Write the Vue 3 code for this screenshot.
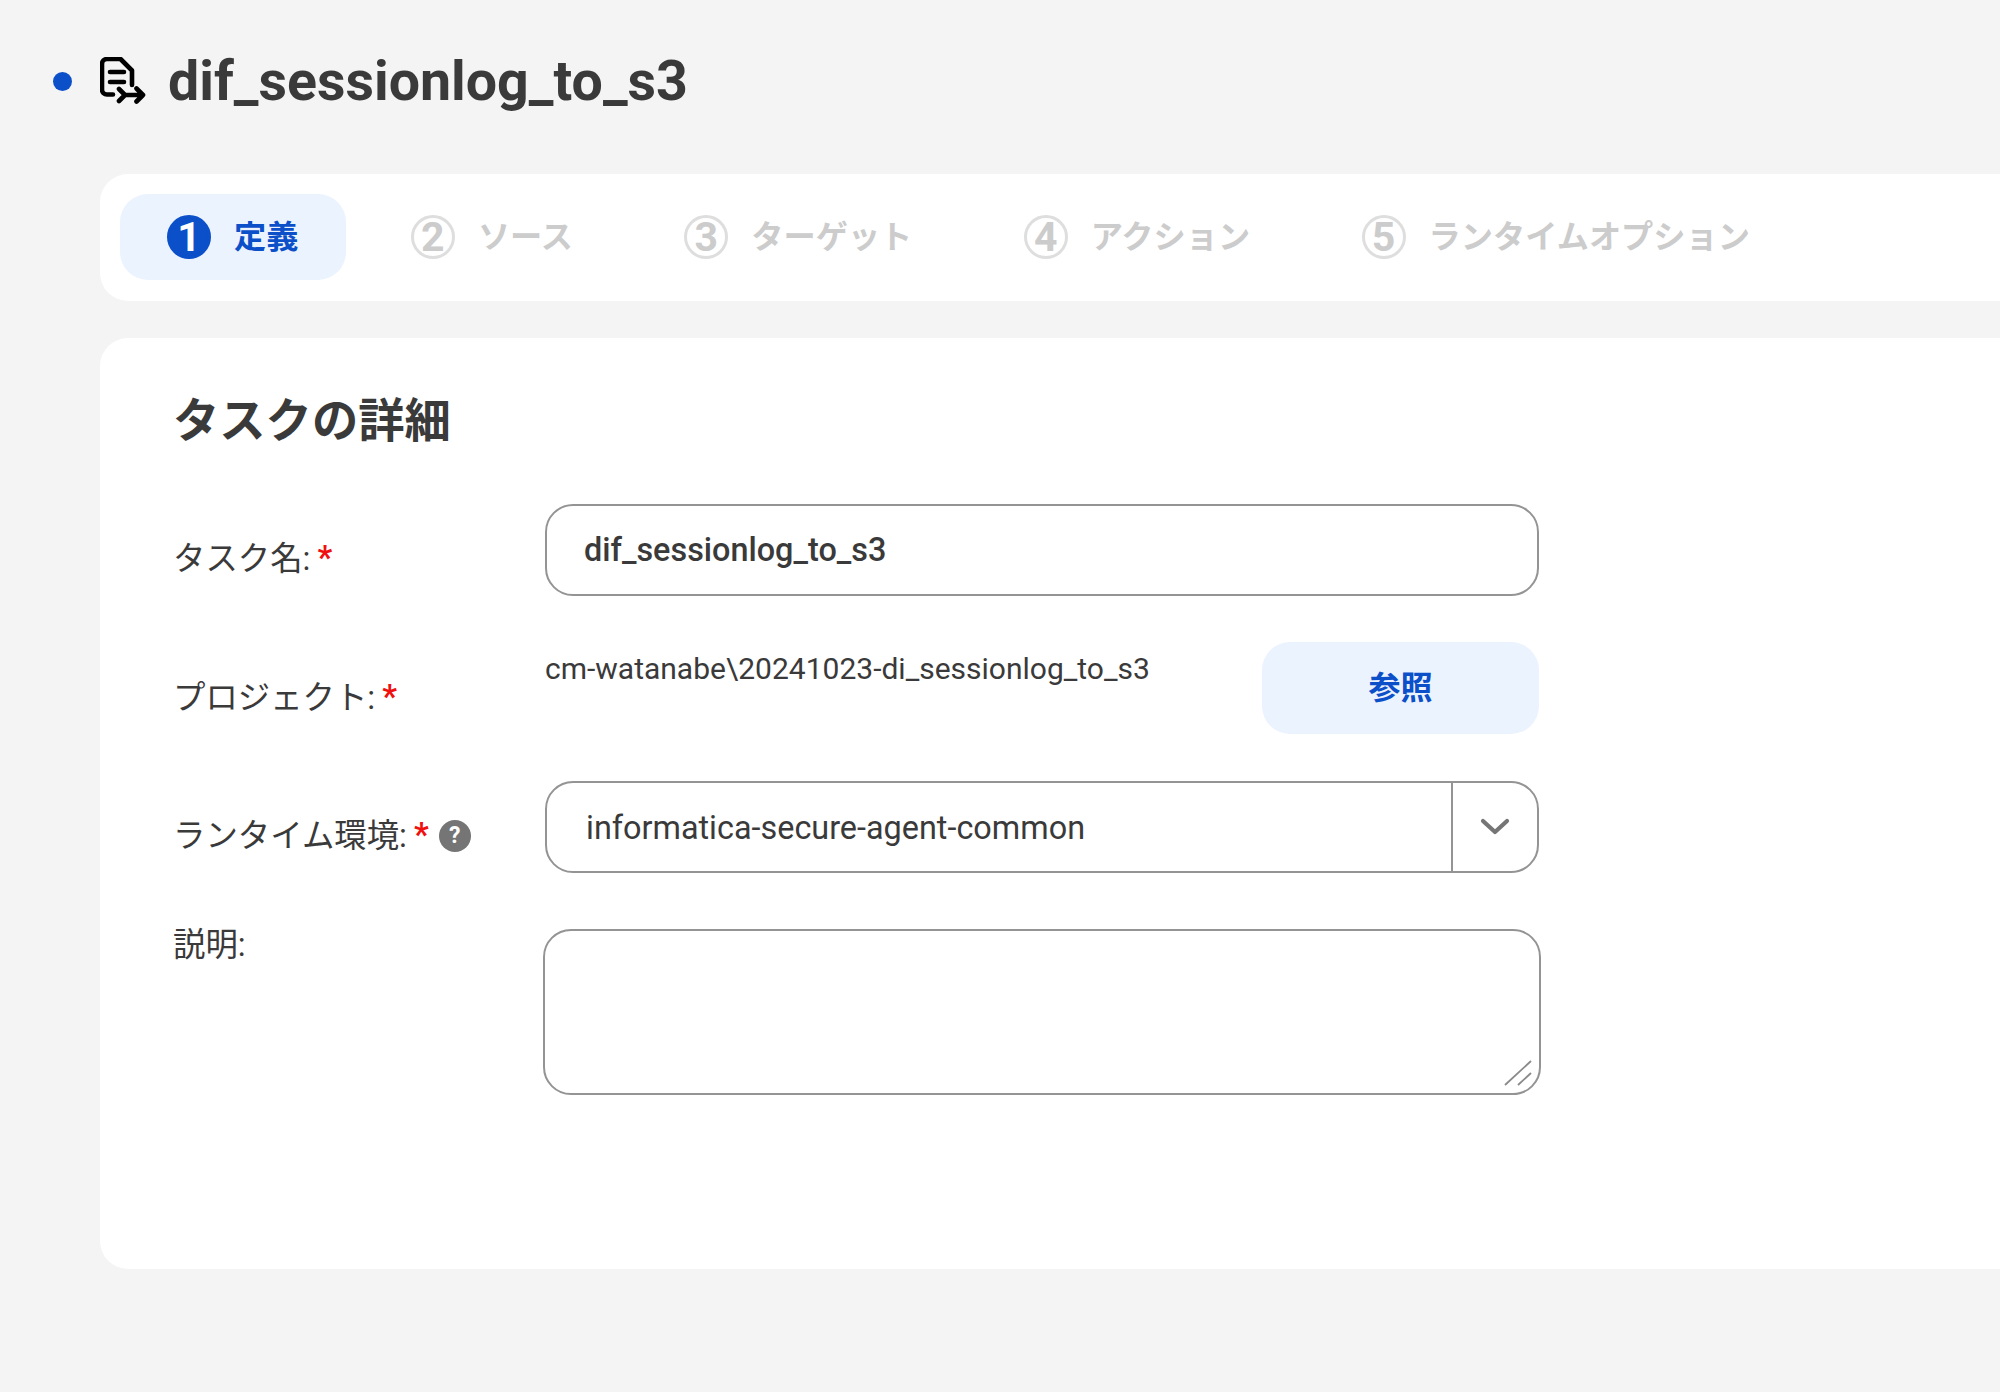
<script setup>
const steps = [
  { n: 1, label: '定義', active: true },
  { n: 2, label: 'ソース' },
  { n: 3, label: 'ターゲット' },
  { n: 4, label: 'アクション' },
  { n: 5, label: 'ランタイムオプション' }
]
</script>

<template>
  <div class="page">
    <header class="head">
      <span class="dot"></span>
      <svg class="doc" viewBox="0 0 46 48" fill="none" stroke="#000" stroke-width="4.6" stroke-linecap="round" stroke-linejoin="round">
        <path d="M13 37.5H7a5 5 0 0 1-5-5V7a5 5 0 0 1 5-5h13.5L32 13.5V28" />
        <path d="M10 15h14M10 25h14" />
        <path d="M19 32l6 6-6 6M24 38h19M36.500 31.500l6.500 6.500-6.500 6.500" />
      </svg>
      <h1 class="title">dif_sessionlog_to_s3</h1>
    </header>

    <nav class="stepbar">
      <div v-for="s in steps" :key="s.n" class="step" :class="{ active: s.active }">
        <span class="num">{{ s.n }}</span>
        <span class="step-label">{{ s.label }}</span>
      </div>
    </nav>

    <section class="card">
      <h2 class="card-title">タスクの詳細</h2>

      <div class="row row-name">
        <div class="label">タスク名:<span class="req">*</span></div>
        <div class="field value-name">dif_sessionlog_to_s3</div>
      </div>

      <div class="row row-project">
        <div class="label">プロジェクト:<span class="req">*</span></div>
        <div class="project">cm-watanabe\20241023-di_sessionlog_to_s3</div>
        <button class="browse" type="button">参照</button>
      </div>

      <div class="row row-runtime">
        <div class="label">ランタイム環境:<span class="req">*</span><span class="help">?</span></div>
        <div class="field select">
          <span class="select-value">informatica-secure-agent-common</span>
          <span class="select-arrow">
            <svg width="30" height="18" viewBox="0 0 30 18" fill="none" stroke="#757575" stroke-width="4.200" stroke-linecap="round" stroke-linejoin="round"><path d="M3 3l12 11L27 3" /></svg>
          </span>
        </div>
      </div>

      <div class="row row-desc">
        <div class="label">説明:</div>
        <div class="textarea">
          <svg class="grip" width="30" height="28" viewBox="0 0 30 28" fill="none" stroke="#8a8a8a" stroke-width="1.800"><path d="M2 26L28 2M15 26L28 14" /></svg>
        </div>
      </div>
    </section>
  </div>
</template>

<style>
html, body { margin: 0; background: #f4f4f4; overflow: hidden; }
</style>

<style scoped>
.page {
  height: 1392px;
  box-sizing: border-box;
  background: #f4f4f4;
  color: #3a3a3a;
  font-family: Roboto, "Noto Sans CJK JP", sans-serif;
  padding: 54px 0 0 53px;
}
.head {
  display: flex;
  align-items: center;
  height: 54px;
}
.dot {
  width: 19px;
  height: 19px;
  border-radius: 50%;
  background: #0b4fc9;
  margin-right: 28px;
}
.doc {
  width: 46px;
  height: 48px;
  margin-right: 22px;
}
.title {
  margin: 2px 0 0;
  font-size: 55.5px;
  font-weight: 700;
  line-height: 54px;
  color: #3a3a3a;
}
.stepbar {
  margin: 66px 0 0 47px;
  height: 127px;
  box-sizing: border-box;
  padding: 20px;
  background: #fff;
  border-radius: 28px 0 0 28px;
  display: flex;
  gap: 17.5px;
}
.step {
  display: flex;
  align-items: center;
  gap: 23px;
  height: 86px;
  padding: 0 47px;
  border-radius: 28px;
  color: #cccccc;
  font-size: 32.2px;
  font-weight: 700;
}
.step.active {
  background: #ebf3ff;
  color: #0b4fc9;
  padding-right: 48px;
}
.num {
  width: 44px;
  height: 44px;
  box-sizing: border-box;
  border: 3px solid #dedede;
  border-radius: 50%;
  display: flex;
  align-items: center;
  justify-content: center;
  font-size: 41px;
  line-height: 1;
}
.active .num {
  border-color: #0b4fc9;
  background: #0b4fc9;
  color: #fff;
}
.step-label { line-height: 44px; white-space: nowrap; }
.card {
  margin: 37px 0 0 47px;
  height: 931px;
  box-sizing: border-box;
  background: #fff;
  border-radius: 28px 0 0 28px;
  padding: 54px 0 0 73px;
}
.card-title {
  margin: 0;
  font-size: 46.3px;
  font-weight: 700;
  line-height: 58px;
  color: #3a3a3a;
}
.row {
  display: flex;
  width: 1366px;
  position: relative;
}
.label {
  width: 372px;
  flex: none;
  font-size: 32.4px;
  line-height: 44px;
  display: flex;
  align-items: center;
  color: #3a3a3a;
}
.req {
  color: #f01010;
  font-weight: 700;
  margin-left: 7px;
  position: relative;
  top: -1px;
}
.help {
  width: 32px;
  height: 32px;
  border-radius: 50%;
  background: #757575;
  color: #fff;
  font-size: 23px;
  font-weight: 700;
  line-height: 32px;
  text-align: center;
  margin-left: 10px;
}
.field {
  box-sizing: border-box;
  width: 994px;
  flex: none;
  height: 92px;
  border: 2px solid #949494;
  border-radius: 28px;
  background: #fff;
}
.row-name { margin-top: 54px; }
.row-name .label { padding-top: 33px; height: 44px; }
.value-name {
  display: flex;
  align-items: center;
  padding: 0 0 0 37px;
  font-size: 32.4px;
  font-weight: 500;
}
.row-project { margin-top: 46px; height: 92px; }
.row-project .label { padding-top: 34px; height: 44px; }
.project {
  flex: 1;
  font-size: 30px;
  line-height: 44px;
  padding-top: 5px;
}
.browse {
  flex: none;
  width: 277px;
  height: 92px;
  border: 0;
  border-radius: 28px;
  background: #ebf3ff;
  color: #0b4fc9;
  font: 700 32px Roboto, "Noto Sans CJK JP", sans-serif;
  padding: 0 0 7px;
}
.row-runtime { margin-top: 47px; }
.row-runtime .label { padding-top: 33px; height: 44px; }
.select {
  display: flex;
  align-items: stretch;
}
.select-value {
  flex: 1;
  padding: 1px 0 0 39px;
  display: flex;
  align-items: center;
  font-size: 32.4px;
  border-right: 2px solid #949494;
}
.select-arrow {
  width: 84px;
  display: flex;
  align-items: center;
  justify-content: center;
}
.row-desc { margin-top: 56px; }
.row-desc .label { height: 44px; margin-top: -6px; align-self: flex-start; }
.textarea {
  position: relative;
  box-sizing: border-box;
  width: 998px;
  flex: none;
  height: 166px;
  margin-left: -2px;
  border: 2px solid #949494;
  border-radius: 28px;
  background: #fff;
}
.grip {
  position: absolute;
  right: 6px;
  bottom: 6px;
}
</style>
